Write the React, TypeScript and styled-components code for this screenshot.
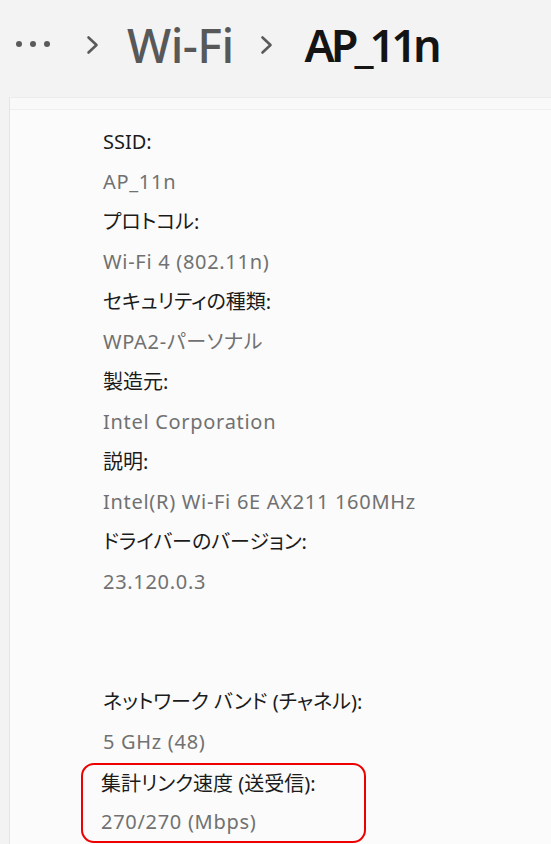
import styled, { createGlobalStyle } from 'styled-components'

const GlobalStyle = createGlobalStyle`
  html, body {
    margin: 0;
    padding: 0;
    background: #f3f3f3;
  }
  body {
    font-family: "Noto Sans", "Noto Sans CJK JP", sans-serif;
  }
`

type Item = { label: string; value: string }

const topItems: Item[] = [
  { label: 'SSID:', value: 'AP_11n' },
  { label: 'プロトコル:', value: 'Wi-Fi 4 (802.11n)' },
  { label: 'セキュリティの種類:', value: 'WPA2-パーソナル' },
  { label: '製造元:', value: 'Intel Corporation' },
  { label: '説明:', value: 'Intel(R) Wi-Fi 6E AX211 160MHz' },
  { label: 'ドライバーのバージョン:', value: '23.120.0.3' },
]

const Chevron = () => (
  <ChevronIcon viewBox="0 0 13 20" width="13" height="20">
    <polyline points="2.5,2.5 10.5,10 2.5,17.5" fill="none" stroke="#5a5a5a" strokeWidth="2.6" strokeLinecap="round" strokeLinejoin="round" />
  </ChevronIcon>
)

export default () => {
  return (
    <>
      <GlobalStyle />
      <SHeader>
        <SMore>
          <span /><span /><span />
        </SMore>
        <Chevron />
        <SCrumb>Wi-Fi</SCrumb>
        <Chevron />
        <SCurrent>AP_11n</SCurrent>
      </SHeader>
      <SPanel>
        <SPanelTop />
        <SList>
          {topItems.map(item => (
            <div key={item.label}>
              <SLabel>{item.label}</SLabel>
              <SValue>{item.value}</SValue>
            </div>
          ))}
          <SSpacer />
          <SLabel>ネットワーク バンド (チャネル):</SLabel>
          <SValue>5 GHz (48)</SValue>
          <SHighlight>
            <SLabel>集計リンク速度 (送受信):</SLabel>
            <SValue>270/270 (Mbps)</SValue>
          </SHighlight>
        </SList>
      </SPanel>
    </>
  )
}

const SHeader = styled.div`
  display: flex;
  align-items: center;
  height: 97px;
  padding: 0 0 8px 16px;
  box-sizing: border-box;
`

const SMore = styled.div`
  display: flex;
  gap: 8px;
  margin-right: 36px;
  margin-top: -2px;
  span {
    width: 6px;
    height: 6px;
    border-radius: 50%;
    background: #5a5a5a;
  }
`

const ChevronIcon = styled.svg`
  flex: none;
`

const SCrumb = styled.div`
  font-size: 47px;
  font-weight: 500;
  color: #585858;
  margin: 0 26px 0 28px;
  letter-spacing: -0.6px;
`

const SCurrent = styled.div`
  font-size: 45px;
  font-weight: 600;
  color: #141414;
  margin-left: 32px;
  letter-spacing: -4px;
`

const SPanel = styled.div`
  margin-left: 9px;
  min-height: 746px;
  background: #fbfbfb;
  border-left: 1px solid #e5e5e5;
  border-top: 1px solid #ececec;
`

const SPanelTop = styled.div`
  height: 11px;
  border-bottom: 1px solid #efefef;
  background: #f9f9f9;
`

const SList = styled.div`
  padding: 12px 0 0 72px;
  display: flex;
  flex-direction: column;
`

const SLabel = styled.div`
  font-size: 20px;
  line-height: 40px;
  color: #1b1b1b;
  padding-left: 21px;
  font-feature-settings: "palt";
`

const SValue = styled(SLabel)`
  color: #717171;
  letter-spacing: 0.7px;
`

const SSpacer = styled.div`
  height: 80px;
`

const SHighlight = styled.div`
  width: 285px;
  box-sizing: border-box;
  border: 2px solid #ee0000;
  border-radius: 13px;
  margin: 1px 0 0 -1px;
  ${SLabel} {
    padding-left: 18px;
    line-height: 38px;
  }
`
